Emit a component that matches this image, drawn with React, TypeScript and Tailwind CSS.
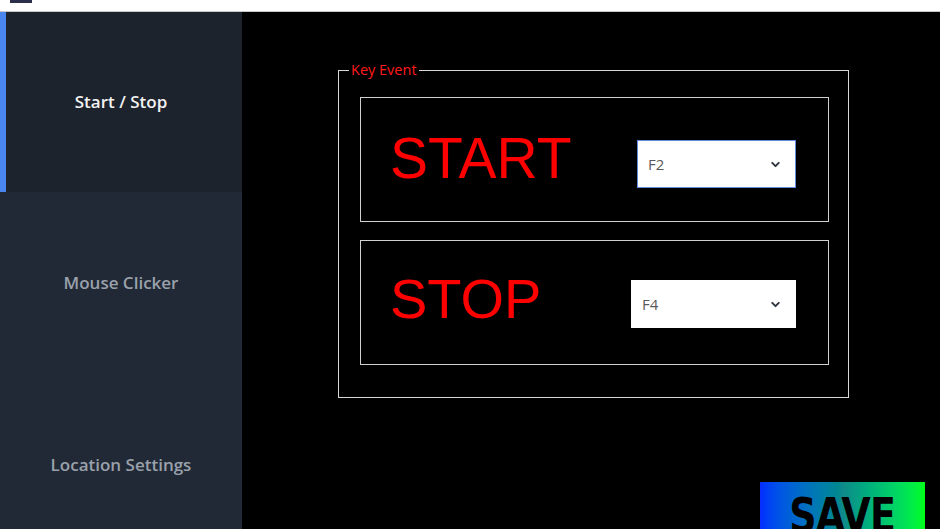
import { ChevronDown } from "lucide-react";

const menu = [
	{ label: "Start / Stop", active: true },
	{ label: "Mouse Clicker", active: false },
	{ label: "Location Settings", active: false },
];

function KeySelect({ value, focused }: { value: string; focused?: boolean }) {
	return (
		<div
			className={
				focused
					? "flex items-center justify-between bg-white border border-[#5b8ad8] w-[159px] h-[48px] pl-[10px] pr-[13px]"
					: "flex items-center justify-between bg-white w-[165px] h-[48px] pl-[11px] pr-[14px]"
			}
		>
			<span className="text-[15px] text-[#5a5a5a] font-['Open_Sans',sans-serif]">{value}</span>
			<ChevronDown size={13} strokeWidth={3.6} className="text-[#2f3640]" />
		</div>
	);
}

export default function App() {
	return (
		<div className="h-[529px] w-[940px] overflow-hidden flex flex-col bg-black font-['Open_Sans',sans-serif]">
			{/* title bar */}
			<div className="h-[12px] shrink-0 bg-white border-b border-[#c8c8c8] flex items-start pl-[10px]">
				<div className="w-[22px] h-[3px] bg-[#2b2f4a]" />
			</div>

			<div className="flex flex-1 min-h-0">
				{/* sidebar */}
				<div className="w-[242px] shrink-0 bg-[#212936] flex flex-col">
					{menu.map((item) => (
						<div
							key={item.label}
							className={
								item.active
									? "h-[180px] shrink-0 flex items-center justify-center bg-[#1d232d] border-l-[6px] border-[#4a86f0] pr-[6px]"
									: "h-[182px] shrink-0 flex items-center justify-center"
							}
						>
							<span
								className={
									item.active
										? "text-[17px] font-semibold text-[#f2f2f2]"
										: "text-[17px] font-semibold text-[#9aa1ab]"
								}
							>
								{item.label}
							</span>
						</div>
					))}
				</div>

				{/* content */}
				<div className="flex-1 flex flex-col pt-[58px] pl-[96px]">
					<div className="relative shrink-0 w-[511px] h-[328px] border border-[#d8d8d8] pt-[26px] pl-[21px] flex flex-col gap-[18px]">
						<span className="absolute -top-[10px] left-[10px] bg-black px-[2px] text-[14.5px] leading-[18px] text-[#ff1a1a]">
							Key Event
						</span>

						<div className="w-[469px] h-[125px] shrink-0 border border-[#d0d0d0] flex items-start">
							<span className="ml-[29px] mt-[32px] text-[57px] leading-[56px] text-[#ff0000] font-['Liberation_Sans',Arial,sans-serif]">
								START
							</span>
							<div className="ml-auto mr-[32px] mt-[42px]">
								<KeySelect value="F2" focused />
							</div>
						</div>

						<div className="w-[469px] h-[125px] shrink-0 border border-[#d0d0d0] flex items-start">
							<span className="ml-[29px] mt-[30px] text-[56px] leading-[56px] text-[#ff0000] font-['Liberation_Sans',Arial,sans-serif]">
								STOP
							</span>
							<div className="ml-auto mr-[32px] mt-[39px]">
								<KeySelect value="F4" />
							</div>
						</div>
					</div>

					<button className="self-end mr-[15px] mt-[84px] w-[165px] h-[60px] shrink-0 bg-gradient-to-r from-[#0a2cff] via-[#0f8a8a] to-[#00ff10] flex justify-center pt-[8px]">
						<span className="text-[48px] leading-[50px] font-black tracking-[-1px] text-black font-['DejaVu_Sans_Condensed','DejaVu_Sans',sans-serif] scale-x-[0.88]">
							SAVE
						</span>
					</button>
				</div>
			</div>
		</div>
	);
}
